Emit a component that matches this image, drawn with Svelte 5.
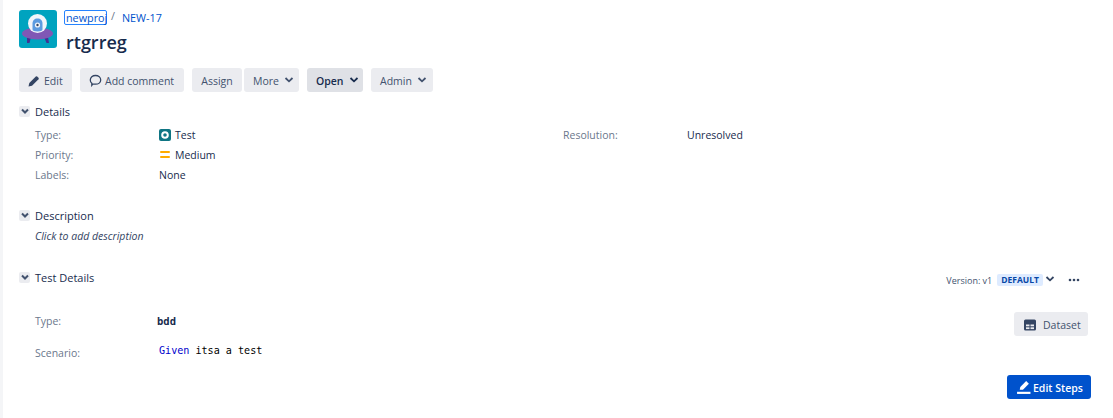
<script lang="ts">
  const details = [
    { label: 'Type:', value: 'Test', icon: 'test' },
    { label: 'Priority:', value: 'Medium', icon: 'medium' },
    { label: 'Labels:', value: 'None', icon: '' }
  ];
</script>

{#snippet toggle()}
  <span class="toggle">
    <svg width="10" height="10" viewBox="0 0 10 10"><path d="M2 3.5 5 6.5 8 3.5" fill="none" stroke="#42526e" stroke-width="2"/></svg>
  </span>
{/snippet}

{#snippet caret()}
  <svg class="caret" width="10" height="10" viewBox="0 0 10 10"><path d="M1.500 3 5 6.300 8.500 3" fill="none" stroke="currentColor" stroke-width="1.800"/></svg>
{/snippet}

<div class="page">
  <header class="head">
    <svg class="avatar" width="38" height="38" viewBox="0 0 38 38">
      <rect width="38" height="38" rx="3" fill="#00a3bf"/>
      <path d="M8 27h4l-1.500 6H8zM25 27h4l1 6h-2.500z" fill="#403294"/>
      <ellipse cx="18.500" cy="23.500" rx="15.500" ry="6" fill="#8058b5"/>
      <ellipse cx="18.500" cy="13.500" rx="9.500" ry="9.500" fill="#f2f5fa"/>
      <path d="M13.500 13.500c0-3 2-5 5-5s5 2 5 5v6c0 1-2 2-5 2s-5-1-5-2z" fill="#5d9be0"/>
      <circle cx="18.500" cy="15" r="2.600" fill="#f2f5fa"/>
      <circle cx="18.500" cy="15" r="1.200" fill="#344563"/>
    </svg>
    <div class="titles">
      <nav class="crumbs">
        <a class="project" href="#p">newproj</a>
        <span class="sep">/</span>
        <a class="key" href="#k">NEW-17</a>
      </nav>
      <h1>rtgrreg</h1>
    </div>
  </header>

  <div class="toolbar">
    <button class="edit">
      <svg width="12" height="12" viewBox="0 0 12 12"><path d="M0.500 11.500 1.300 8 7.800 1.500a1 1 0 0 1 1.400 0l1.300 1.300a1 1 0 0 1 0 1.400L4 10.700z" fill="#344563"/></svg>
      Edit
    </button>
    <button class="comment">
      <svg width="13" height="13" viewBox="0 0 13 13"><path d="M6.500 1.500c3 0 5.200 1.900 5.200 4.400s-2.200 4.300-5.200 4.300H3.800l-1 1.200v-2.200C1.800 8.500 1.300 7.300 1.300 5.900 1.300 3.400 3.500 1.500 6.500 1.500z" fill="none" stroke="#344563" stroke-width="1.300"/></svg>
      Add comment
    </button>
    <div class="group">
      <button class="assign">Assign</button>
      <button class="more">More {@render caret()}</button>
    </div>
    <button class="open">Open {@render caret()}</button>
    <button class="admin">Admin {@render caret()}</button>
  </div>

  <section class="details">
    <h2>{@render toggle()} Details</h2>
    <div class="detail-grid">
      <dl>
        {#each details as row}
          <div class="row">
            <dt>{row.label}</dt>
            <dd>
              {#if row.icon === 'test'}
                <svg width="12" height="12" viewBox="0 0 12 12"><rect width="12" height="12" rx="2" fill="#0f7583"/><circle cx="6" cy="6" r="2.800" fill="none" stroke="#fff" stroke-width="2"/></svg>
              {:else if row.icon === 'medium'}
                <svg width="12" height="12" viewBox="0 0 12 12"><rect x="1" y="2" width="10" height="2" rx="1" fill="#ffab00"/><rect x="1" y="7" width="10" height="2" rx="1" fill="#ffab00"/></svg>
              {/if}
              <span class:gap={row.icon}>{row.value}</span>
            </dd>
          </div>
        {/each}
      </dl>
      <dl class="right">
        <div class="row">
          <dt>Resolution:</dt>
          <dd>Unresolved</dd>
        </div>
      </dl>
    </div>
  </section>

  <section class="description">
    <h2>{@render toggle()} Description</h2>
    <p>Click to add description</p>
  </section>

  <section class="test">
    <div class="test-head">
      <h2>{@render toggle()} Test Details</h2>
      <div class="version">
        <span class="vlabel">Version: v1</span>
        <span class="lozenge">DEFAULT</span>
        {@render caret()}
        <svg class="dots" width="12" height="4" viewBox="0 0 12 4"><circle cx="2" cy="2" r="1.300"/><circle cx="6" cy="2" r="1.300"/><circle cx="10" cy="2" r="1.300"/></svg>
      </div>
    </div>
    <div class="test-body">
      <div class="fields">
        <div class="field type"><span class="flabel">Type:</span><strong>bdd</strong></div>
        <div class="field scen"><span class="flabel">Scenario:</span><code><span class="kw">Given</span> itsa a test</code></div>
      </div>
      <button class="dataset">
        <svg width="14" height="14" viewBox="0 0 14 14"><rect x="1" y="1.500" width="12" height="11" rx="1.500" fill="#344563"/><rect x="3" y="6.500" width="3.500" height="1.800" fill="#ebecf0"/><rect x="7.500" y="6.500" width="3.500" height="1.800" fill="#ebecf0"/><rect x="3" y="9.300" width="3.500" height="1.800" fill="#ebecf0"/><rect x="7.500" y="9.300" width="3.500" height="1.800" fill="#ebecf0"/></svg>
        Dataset
      </button>
    </div>
    <div class="actions">
      <button class="primary">
        <svg width="15" height="15" viewBox="0 0 14 14"><path d="M3.500 9 4 6.500 9.500 1 12 3.500 6.500 9z" fill="#fff"/><rect x="1" y="11" width="12.500" height="2" fill="#fff"/></svg>
        Edit Steps
      </button>
    </div>
  </section>
</div>

<style>
  :global(body) {
    margin: 0;
    background: #fff;
  }

  .page {
    box-sizing: border-box;
    height: 418px;
    overflow: hidden;
    border-left: 3px solid #f4f5f7;
    padding: 10px 22px 0 16px;
    font-family: "Open Sans", "Noto Sans", sans-serif;
    font-size: 10.500px;
    color: #172b4d;
  }

  button {
    display: inline-flex;
    align-items: center;
    gap: 3px;
    height: 24px;
    padding: 1px 9px 0;
    border: 0;
    border-radius: 3px;
    background: #ebecf0;
    color: #42526e;
    font: inherit;
    white-space: nowrap;
  }

  button svg {
    flex: none;
  }

  .head {
    display: flex;
    gap: 7px;
    height: 58px;
  }

  .avatar {
    flex: none;
  }

  .titles {
    margin-top: -1px;
  }

  .crumbs {
    display: flex;
    align-items: center;
    height: 16px;
    font-size: 10.800px;
  }

  .crumbs a {
    color: #0052cc;
    text-decoration: none;
  }

  .project {
    box-sizing: border-box;
    width: 43px;
    height: 15px;
    line-height: 13px;
    padding-left: 1px;
    border: 1px solid #2684ff;
    border-radius: 2px;
  }

  .sep {
    margin: -3px 7px 0 4px;
    color: #6b778c;
  }

  h1 {
    margin: 4px 0 0 2px;
    font-size: 18px;
    line-height: 26px;
    font-weight: 600;
    color: #172b4d;
  }

  .toolbar {
    display: flex;
    gap: 8px;
  }

  .group {
    display: flex;
    gap: 2px;
  }

  .edit {
    width: 53px;
    gap: 4px;
  }

  .comment {
    width: 104px;
  }

  .assign {
    width: 50px;
    justify-content: center;
  }

  .more {
    width: 55px;
    gap: 4px;
  }

  .open {
    width: 56px;
    background: #dfe1e6;
    color: #172b4d;
    font-weight: 600;
    gap: 4px;
  }

  .admin {
    width: 62px;
    gap: 4px;
  }

  .caret {
    flex: none;
    margin-left: 1px;
    margin-top: -2px;
  }

  h2 {
    display: flex;
    align-items: center;
    gap: 5px;
    margin: 0;
    height: 16px;
    font-size: 11px;
    font-weight: 400;
    color: #172b4d;
  }

  .toggle {
    display: inline-flex;
    align-items: center;
    justify-content: center;
    width: 11px;
    height: 11px;
    border-radius: 2px;
    background: #ebecf0;
  }

  .details {
    margin-top: 11px;
  }

  .detail-grid {
    display: flex;
    margin-top: 6px;
    padding-left: 16px;
  }

  dl {
    margin: 0;
    width: 528px;
  }

  .row {
    display: flex;
    align-items: center;
    height: 20px;
  }

  dt {
    width: 124px;
    color: #6b778c;
  }

  dd {
    display: flex;
    align-items: center;
    margin: 0;
  }

  .gap {
    margin-left: 4px;
  }

  .description {
    margin-top: 22px;
  }

  .description p {
    margin: 6px 0 0 16px;
    font-style: italic;
    color: #344563;
  }

  .test {
    margin-top: 25px;
  }

  .test-head {
    display: flex;
    align-items: center;
    justify-content: space-between;
    height: 18px;
    padding-right: 11px;
  }

  .version {
    display: flex;
    align-items: center;
    margin-top: 6px;
    font-size: 9px;
    color: #42526e;
  }

  .lozenge {
    margin-left: 5px;
    padding: 0 4px;
    height: 12px;
    line-height: 12px;
    border-radius: 2px;
    background: #deebff;
    color: #0747a6;
    font-size: 8.500px;
    font-weight: 700;
  }

  .version .caret {
    margin: -2px 0 0 2px;
    color: #344563;
  }

  .dots {
    margin-left: 13px;
    fill: #344563;
  }

  .test-body {
    display: flex;
    justify-content: space-between;
    padding: 28px 3px 0 16px;
  }

  .field {
    display: flex;
    align-items: center;
  }

  .flabel {
    width: 122px;
    color: #6b778c;
  }

  .field strong {
    font-family: "DejaVu Sans Mono", "Liberation Mono", monospace;
    font-size: 10.500px;
  }

  .scen {
    margin-top: 18px;
  }

  code {
    margin: -5px 0 0 2px;
    font-family: "DejaVu Sans Mono", "Liberation Mono", monospace;
    font-size: 10.100px;
    color: #000;
  }

  .kw {
    color: #0000cc;
  }

  .dataset {
    width: 74px;
    height: 24px;
    gap: 6px;
    margin-top: -2px;
  }

  .actions {
    display: flex;
    justify-content: flex-end;
    padding: 15px 0 0;
  }

  .primary {
    width: 84px;
    background: #0052cc;
    color: #fff;
    font-weight: 600;
    gap: 2px;
  }
</style>
